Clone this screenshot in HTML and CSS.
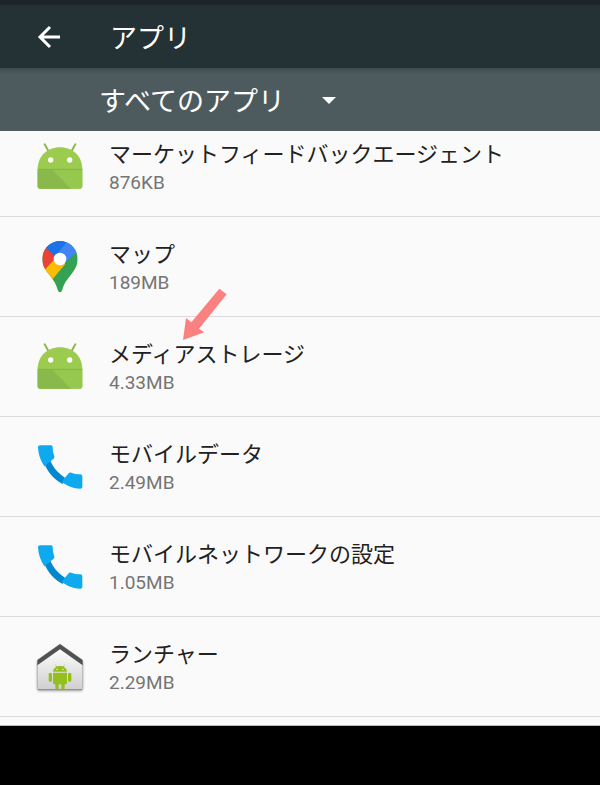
FILE: index.html
```html
<!DOCTYPE html>
<html lang="ja">
<head>
    <meta charset="UTF-8">
    <meta name="viewport" content="width=device-width, initial-scale=1.0">
    <title>アプリ</title>
    <link rel="stylesheet" href="styles.css">
</head>
<body>
    <!-- Shared icons -->
    <svg class="icon-defs" width="0" height="0" aria-hidden="true">
        <symbol id="icon-android" viewBox="15 20 150 150">
            <path d="M44 27L54 45M136 27L126 45" stroke="#8fb84f" stroke-width="6" stroke-linecap="round" fill="none"/>
            <path d="M23 102C23 62 52 36 90 36S157 62 157 102V152Q157 160 149 160H31Q23 160 23 152Z" fill="#9ccc4f"/>
            <path d="M23 102H157V152Q157 160 149 160H31Q23 160 23 152Z" fill="#96c850"/>
            <path d="M26 103H68L122 160H31Q23 160 23 152V106Z" fill="#89b94a"/>
            <path d="M23 102H157" stroke="#7aa845" stroke-width="2"/>
            <circle cx="62" cy="74" r="8" fill="#fff"/>
            <circle cx="119" cy="74" r="8" fill="#fff"/>
        </symbol>
        <symbol id="icon-phone" viewBox="15 20 150 150">
            <path d="M43 84L61 76C69 94 82 112 105 127L98 146C73 134 53 112 43 84Z" fill="#0288d1"/>
            <path d="M30 30H63Q68 30 68 35C68 45 70 54 73 63Q74 67 71 70L43 93C31 76 25 56 24 36Q24 30 30 30Z" fill="#0fa9f0"/>
            <path d="M95 139L116 114Q119 111 124 112C132 115 141 117 151 117Q157 117 157 123V155Q157 160 151 160C130 160 110 151 95 139Z" fill="#0fa9f0"/>
        </symbol>
    </svg>

    <div class="status-bar"></div>
    <header class="toolbar">
        <button class="back-button" type="button" aria-label="戻る">
            <svg width="24" height="24" viewBox="0 0 24 24" fill="none" stroke="#fff" stroke-width="3">
                <path d="M23 12H3M13 2L3 12L13 22"/>
            </svg>
        </button>
        <h1 class="toolbar-title">アプリ</h1>
    </header>
    <div class="filter-bar">
        <div class="filter">
            <select class="filter-select" aria-label="アプリの表示">
                <option>すべてのアプリ</option>
            </select>
            <span class="filter-caret"></span>
        </div>
    </div>

    <main class="app-list-wrap">
        <ul class="app-list">
            <li class="app-row">
                <svg class="app-icon"><use href="#icon-android"/></svg>
                <div class="app-text">
                    <div class="app-name">マーケットフィードバックエージェント</div>
                    <div class="app-size">876KB</div>
                </div>
            </li>
            <li class="app-row">
                <svg class="app-icon" viewBox="15 20 150 150">
                    <clipPath id="pin">
                        <path d="M90 17C119 17 143 41 143 71C143 92 133 105 120 122C107 138 101 148 97 163Q94 171 90 171T83 163C79 148 73 138 61 122C47 105 37 92 37 71C37 41 61 17 90 17Z"/>
                    </clipPath>
                    <g clip-path="url(#pin)">
                        <rect x="30" y="10" width="120" height="170" fill="#34a153"/>
                        <path d="M30 108L78 52L106 86L64 136L30 150Z" fill="#fbbc04"/>
                        <path d="M30 20H50V38L80 65L40 108H30Z" fill="#ea4335"/>
                        <path d="M48 38L78 66L114 23L90 10H48Z" fill="#1a73e8"/>
                        <path d="M112 18L78 60L102 84L146 46V10H112Z" fill="#4285f4"/>
                    </g>
                    <circle cx="90" cy="71" r="19" fill="#fff"/>
                </svg>
                <div class="app-text">
                    <div class="app-name">マップ</div>
                    <div class="app-size">189MB</div>
                </div>
            </li>
            <li class="app-row">
                <svg class="app-icon"><use href="#icon-android"/></svg>
                <div class="app-text">
                    <div class="app-name">メディアストレージ</div>
                    <div class="app-size">4.33MB</div>
                </div>
                <!-- Arrow pointing at this app -->
                <svg class="pointer-arrow" viewBox="39 24 132 156">
                    <path d="M148 26L170 43L87 146L103 157L39 180L48 114L64 127Z" fill="#fb8080"/>
                </svg>
            </li>
            <li class="app-row">
                <svg class="app-icon"><use href="#icon-phone"/></svg>
                <div class="app-text">
                    <div class="app-name">モバイルデータ</div>
                    <div class="app-size">2.49MB</div>
                </div>
            </li>
            <li class="app-row">
                <svg class="app-icon"><use href="#icon-phone"/></svg>
                <div class="app-text">
                    <div class="app-name">モバイルネットワークの設定</div>
                    <div class="app-size">1.05MB</div>
                </div>
            </li>
            <li class="app-row">
                <svg class="app-icon launcher-icon" viewBox="15 6 150 150">
                    <defs>
                        <linearGradient id="house" x1="0" y1="0" x2="0" y2="1">
                            <stop offset="0" stop-color="#fff"/>
                            <stop offset="1" stop-color="#cfcfcf"/>
                        </linearGradient>
                    </defs>
                    <path d="M90 20L158 68V144Q158 149 153 149H27Q22 149 22 144V68Z" fill="url(#house)" stroke="#a5a5a5" stroke-width="2"/>
                    <path d="M24 149H156" stroke="#8d8d8d" stroke-width="3"/>
                    <path d="M22 60L90 12L158 60V76L90 28L22 76Z" fill="#505153"/>
                    <g fill="#93c01f">
                        <path d="M69 95C70 84 79 78 90 78S110 84 111 95Z"/>
                        <path d="M76 74L81 82M104 74L99 82" stroke="#93c01f" stroke-width="2"/>
                        <path d="M69 98H111V129Q111 133 107 133H104V148H94V133H86V148H76V133H73Q69 133 69 129Z"/>
                        <rect x="56" y="98" width="10" height="28" rx="5"/>
                        <rect x="114" y="98" width="10" height="28" rx="5"/>
                    </g>
                    <circle cx="81" cy="88" r="2" fill="#fff"/>
                    <circle cx="99" cy="88" r="2" fill="#fff"/>
                </svg>
                <div class="app-text">
                    <div class="app-name">ランチャー</div>
                    <div class="app-size">2.29MB</div>
                </div>
            </li>
        </ul>
    </main>
</body>
</html>
```
FILE: styles.css
```css
* {
    box-sizing: border-box;
}

body {
    margin: 0;
    min-height: 100vh;
    background-color: #000;
    font-family: Roboto, "Noto Sans CJK JP", sans-serif;
    color: #212121;
}

.icon-defs {
    position: absolute;
}

.status-bar {
    height: 5px;
    background-color: #1c2628;
}

/* Top toolbar */
.toolbar {
    display: flex;
    align-items: center;
    gap: 25px;
    height: 63px;
    padding-left: 25px;
    background-color: #243236;
}

.back-button {
    display: flex;
    align-items: center;
    justify-content: center;
    width: 48px;
    height: 48px;
    margin-right: 12px;
    padding: 0;
    border: none;
    background: none;
    cursor: pointer;
}

.toolbar-title {
    margin: 0;
    padding-top: 4px;
    font-size: 27px;
    font-weight: 400;
    line-height: 40px;
    color: #fff;
}

/* Filter drop-down */
.filter-bar {
    height: 63px;
    padding: 10px 0 0 99px;
    background: linear-gradient(#3f4c50, #4d5b5f 6px);
}

.filter {
    position: relative;
    width: 244px;
}

.filter-select {
    width: 100%;
    height: 48px;
    padding: 0;
    border: none;
    background: none;
    appearance: none;
    font-family: inherit;
    font-size: 27px;
    line-height: 48px;
    color: #fff;
}

.filter-caret {
    position: absolute;
    top: 19px;
    right: 7px;
    border-top: 7px solid #fff;
    border-left: 7px solid transparent;
    border-right: 7px solid transparent;
    pointer-events: none;
}

/* App list, scrolled a little way down */
.app-list-wrap {
    overflow: hidden;
    padding-bottom: 8px;
    border-bottom: 1px solid #bdbdbd;
    background-color: #fafafa;
}

.app-list {
    margin: -14px 0 0;
    padding: 0;
    list-style: none;
}

.app-row {
    position: relative;
    display: flex;
    align-items: center;
    gap: 24px;
    height: 100px;
    padding-left: 35px;
    border-bottom: 1px solid #dadada;
}

.app-icon {
    flex: none;
    width: 50px;
    height: 50px;
    overflow: visible;
}

.launcher-icon {
    filter: drop-shadow(0 1px 1px rgba(0, 0, 0, 0.3));
}

.app-name {
    font-size: 22px;
    line-height: 32px;
}

.app-size {
    font-size: 19px;
    line-height: 24px;
    color: #757575;
}

.pointer-arrow {
    position: absolute;
    top: -29px;
    left: 183px;
    width: 44px;
    height: 52px;
}
```
